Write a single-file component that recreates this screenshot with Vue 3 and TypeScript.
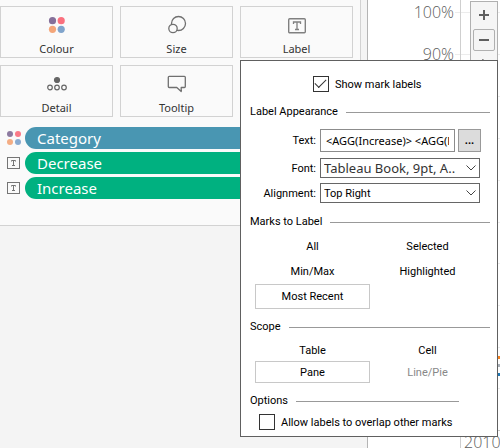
<script setup lang="ts">
import { ref } from 'vue'

type Icon = 'colour' | 'size' | 'text' | 'detail' | 'tooltip'

const cards: { name: string; icon: Icon }[] = [
  { name: 'Colour', icon: 'colour' },
  { name: 'Size', icon: 'size' },
  { name: 'Label', icon: 'text' },
  { name: 'Detail', icon: 'detail' },
  { name: 'Tooltip', icon: 'tooltip' },
]

const pills: { name: string; icon: Icon; kind: string }[] = [
  { name: 'Category', icon: 'colour', kind: 'dimension' },
  { name: 'Decrease', icon: 'text', kind: 'measure' },
  { name: 'Increase', icon: 'text', kind: 'measure' },
]

const marks = ['All', 'Selected', 'Min/Max', 'Highlighted', 'Most Recent']
const scopes = ['Table', 'Cell', 'Pane', 'Line/Pie']

const showLabels = ref(true)
const overlap = ref(false)
const text = ref('<AGG(Increase)> <AGG(Decrease)>')
const mark = ref('Most Recent')
const scope = ref('Pane')

const gridLines = [12, 54, 96, 138, 180, 222, 263, 305, 347, 388]
</script>

<template>
  <div class="workspace">
    <aside class="side">
      <section class="marks-card">
        <div class="cards">
          <button v-for="c in cards" :key="c.name" type="button" class="card">
            <svg v-if="c.icon === 'colour'" width="20" height="20" viewBox="0 0 20 20">
              <circle cx="5.5" cy="5.7" r="3.6" fill="#85709a" />
              <circle cx="14.2" cy="5.7" r="3.6" fill="#fa707e" />
              <circle cx="5.5" cy="14.3" r="3.6" fill="#f4a67a" />
              <circle cx="14.2" cy="14.3" r="3.6" fill="#80a4cc" />
            </svg>
            <svg v-else-if="c.icon === 'size'" width="20" height="20" viewBox="0 0 20 20" fill="#fafafa" stroke="#707070" stroke-width="1.3">
              <circle cx="11.5" cy="8.5" r="7" />
              <circle cx="6" cy="13.5" r="4.2" />
            </svg>
            <svg v-else-if="c.icon === 'text'" width="20" height="20" viewBox="0 0 20 20" fill="none" stroke="#808080">
              <rect x="1.7" y="3.7" width="16.6" height="14" rx="1" stroke-width="1.4" />
              <path d="M6.5 9V7h7v2M10 7v7.5M8 14.5h4" stroke-width="1.3" />
            </svg>
            <svg v-else-if="c.icon === 'detail'" width="20" height="20" viewBox="0 0 20 20" fill="none" stroke="#666" stroke-width="1.2">
              <circle cx="10" cy="6" r="2.5" fill="#666" />
              <circle cx="3" cy="13.5" r="2.3" />
              <circle cx="10" cy="13.5" r="2.3" />
              <circle cx="17" cy="13.5" r="2.3" />
            </svg>
            <svg v-else width="20" height="20" viewBox="0 0 20 20" fill="none" stroke="#707070" stroke-width="1.3" stroke-linejoin="round">
              <path d="M2.2 2.3h15.2q.9 0 .9.9v9.4q0 .9-.9.9h-3.2v4L9.8 13.5H2.2q-.9 0-.9-.9V3.2q0-.9.9-.9z" />
            </svg>
            <span>{{ c.name }}</span>
          </button>
        </div>
        <ul class="pills">
          <li v-for="p in pills" :key="p.name">
            <svg v-if="p.icon === 'colour'" width="14" height="14" viewBox="0 0 14 14">
              <circle cx="3" cy="3" r="3" fill="#8d7aa0" />
              <circle cx="11" cy="3" r="3" fill="#fa7a88" />
              <circle cx="3" cy="11" r="3" fill="#f4ad84" />
              <circle cx="11" cy="11" r="3" fill="#8aabd0" />
            </svg>
            <svg v-else width="14" height="14" viewBox="0 0 14 14" fill="none" stroke="#757575">
              <rect x="0.5" y="1.5" width="12" height="11" />
              <path d="M4.5 5.5v-1h4v1M6.5 4.5v5M5 9.5h3" />
            </svg>
            <span class="pill" :class="p.kind">{{ p.name }}</span>
          </li>
        </ul>
      </section>
    </aside>

    <main class="view">
      <svg class="chart" width="100%" height="448">
        <g stroke="#ececec">
          <line v-for="y in gridLines" :key="y" x1="87" x2="100%" :y1="y + 0.5" :y2="y + 0.5" />
        </g>
        <line x1="0" x2="100%" y1="430.5" y2="430.5" stroke="#c4c4c4" />
        <line x1="92.5" x2="92.5" y1="0" y2="448" stroke="#cfcfcf" />
        <g fill="#5c5c5c" class="axis">
          <text x="86" y="18" text-anchor="end">100%</text>
          <text x="86" y="60" text-anchor="end">90%</text>
          <text x="96" y="448">2010</text>
        </g>
        <rect x="126" y="356" width="100%" height="3" fill="#f5821f" />
        <rect x="126" y="364" width="100%" height="3" fill="#a9b0b8" />
        <rect x="126" y="373" width="100%" height="3" fill="#1f77b4" />
      </svg>
      <div class="toolbar">
        <button type="button" aria-label="Zoom in">
          <svg width="12" height="12" viewBox="0 0 12 12" stroke="#606060" stroke-width="2"><path d="M6 1v10M1 6h10" /></svg>
        </button>
        <button type="button" aria-label="Zoom out" class="boxed">
          <svg width="12" height="12" viewBox="0 0 12 12" stroke="#606060" stroke-width="2"><path d="M1 6h10" /></svg>
        </button>
        <button type="button" aria-label="Pan">
          <svg width="12" height="12" viewBox="0 0 12 12" fill="none" stroke="#606060"><path d="M4.5.5v9l6-6z" /></svg>
        </button>
      </div>
    </main>

    <form class="popup" @submit.prevent>
      <label class="check show">
        <input v-model="showLabels" type="checkbox" />
        <span>Show mark labels</span>
      </label>

      <h2 class="appearance">Label Appearance</h2>
      <div class="field text-field">
        <label for="label-text">Text:</label>
        <input id="label-text" v-model="text" type="text" />
        <button type="button" aria-label="Edit text">...</button>
      </div>
      <div class="field">
        <label for="label-font">Font:</label>
        <div class="select">
          <select id="label-font" class="font-name"><option>Tableau Book, 9pt, A..</option></select>
          <svg width="10" height="6" viewBox="0 0 10 6" fill="none" stroke="#444"><path d="M.5.5 5 5 9.5.5" /></svg>
        </div>
      </div>
      <div class="field">
        <label for="label-align">Alignment:</label>
        <div class="select">
          <select id="label-align"><option>Top Right</option></select>
          <svg width="10" height="6" viewBox="0 0 10 6" fill="none" stroke="#444"><path d="M.5.5 5 5 9.5.5" /></svg>
        </div>
      </div>

      <h2 class="marks-title">Marks to Label</h2>
      <div class="choices marks">
        <button v-for="m in marks" :key="m" type="button" :class="{ on: m === mark }" @click="mark = m">{{ m }}</button>
      </div>

      <h2>Scope</h2>
      <div class="choices scopes">
        <button v-for="s in scopes" :key="s" type="button" :disabled="s === 'Line/Pie'" :class="{ on: s === scope }" @click="scope = s">{{ s }}</button>
      </div>

      <h2 class="options">Options</h2>
      <label class="check overlap">
        <input v-model="overlap" type="checkbox" />
        <span>Allow labels to overlap other marks</span>
      </label>
    </form>
  </div>
</template>

<style>
body {
  background: #f4f4f4;
}
</style>

<style scoped>
.workspace {
  position: relative;
  display: flex;
  min-height: 100vh;
  overflow: hidden;
  font-family: "Noto Sans", "Open Sans", sans-serif;
  font-size: 11px;
  color: #000;
}

button,
input,
select {
  box-sizing: border-box;
  margin: 0;
  padding: 0;
  border: 0;
  background: none;
  font: inherit;
  color: inherit;
}

.side {
  flex: none;
  width: 367px;
  background: #f4f4f4;
}

.marks-card {
  box-sizing: border-box;
  width: 361px;
  padding: 6px 7px 26px 0;
  background: #fafafa;
  border: solid #d2d2d2;
  border-width: 0 1px 1px 0;
}

.cards {
  display: grid;
  grid-template-columns: repeat(3, 113px);
  gap: 7px;
}

.card {
  display: flex;
  flex-direction: column;
  align-items: center;
  justify-content: space-between;
  height: 52px;
  padding: 8px 0 0;
  border: 1px solid #d2d2d2;
  color: #333;
}

.card span {
  line-height: 16px;
}

.pills {
  display: grid;
  gap: 3px;
  margin: 10px 0 0;
  padding: 0 0 0 7px;
  list-style: none;
}

.pills li {
  display: flex;
  align-items: center;
  gap: 4px;
}

.pill {
  flex: 1;
  padding-left: 12px;
  border-radius: 11px;
  font-size: 15px;
  line-height: 22px;
  color: #fff;
}

.dimension {
  background: #4996b2;
}

.measure {
  background: #00b180;
}

.view {
  position: relative;
  flex: 1;
  min-width: 0;
  background: #fff;
  border-left: 1px solid #b4b4b4;
}

.chart {
  display: block;
}

.axis {
  font-family: "Open Sans", sans-serif;
  font-size: 16px;
  font-weight: 300;
}

.toolbar {
  position: absolute;
  top: 1px;
  right: 2px;
  display: flex;
  flex-direction: column;
  gap: 3px;
  padding: 2px;
  background: #f5f5f5;
  border: 1px solid #b0b0b0;
}

.toolbar button {
  display: flex;
  align-items: center;
  justify-content: center;
  width: 22px;
  height: 22px;
}

.toolbar .boxed {
  border: 1px solid #b0b0b0;
  border-radius: 2px;
}

.popup {
  position: absolute;
  top: 60px;
  left: 240px;
  box-sizing: border-box;
  width: 258px;
  padding: 15px 7px 6px 9px;
  background: #fff;
  border: 1px solid #606060;
  font-family: Roboto, sans-serif;
}

.check {
  display: flex;
  align-items: center;
  gap: 6px;
  height: 16px;
}

.check input {
  appearance: none;
  display: grid;
  width: 16px;
  height: 16px;
  border: 1px solid #333;
}

.check input:checked::before {
  content: "";
  width: 10px;
  height: 5px;
  margin: 2px 0 0 1px;
  border: solid #333;
  border-width: 0 0 1px 1px;
  transform: rotate(-45deg);
}

.show {
  margin-left: 63px;
}

.overlap {
  margin: 3px 0 0 9px;
}

h2 {
  display: flex;
  align-items: center;
  gap: 8px;
  margin: 8px 0 2px;
  font-size: 11px;
  font-weight: 400;
  line-height: 20px;
}

h2::after {
  content: "";
  flex: 1;
  height: 1px;
  background: #999;
}

.appearance {
  margin: 10px 0 7px;
}

.marks-title {
  margin-top: 9px;
}

.options {
  margin-right: 31px;
}

.field {
  display: grid;
  grid-template-columns: 66px 160px;
  gap: 4px;
  align-items: center;
  margin-bottom: 5px;
}

.field label {
  text-align: right;
}

.text-field {
  grid-template-columns: 66px 135px 22px;
  column-gap: 4px;
  margin-bottom: 6px;
}

.text-field input {
  height: 23px;
  padding: 0 5px;
  border: 1px solid #8c8c8c;
  font-family: "Noto Sans", sans-serif;
}

.text-field button {
  height: 23px;
  margin-left: -1px;
  background: #dcdcdc;
  border: 1px solid #999;
  font-weight: 700;
}

.select {
  display: grid;
  align-items: center;
}

.select > * {
  grid-area: 1 / 1;
}

.select select {
  appearance: none;
  width: 100%;
  height: 20px;
  padding: 0 3px;
  border: 1px solid #666;
}

.select .font-name {
  font-family: "Noto Sans", sans-serif;
  font-size: 13px;
  color: #333;
}

.select svg {
  justify-self: end;
  margin-right: 4px;
  pointer-events: none;
}

.choices {
  display: grid;
  grid-template-columns: 115px 115px;
  margin-left: 5px;
}

.marks button {
  height: 25px;
}

.scopes button {
  height: 22px;
}

.choices .on {
  border: 1px solid #c8c8c8;
}

.choices button:disabled {
  color: #888;
}
</style>
